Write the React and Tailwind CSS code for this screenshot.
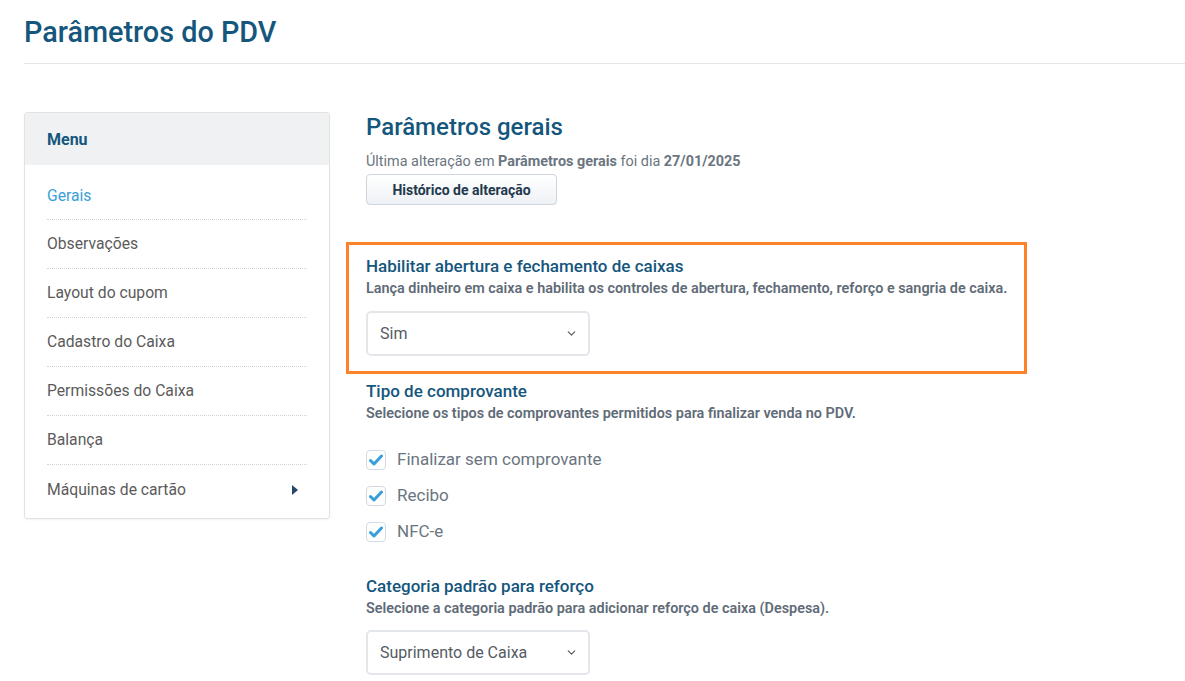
import { ChevronDown } from 'lucide-react'

const menu = ['Gerais', 'Observações', 'Layout do cupom', 'Cadastro do Caixa', 'Permissões do Caixa', 'Balança', 'Máquinas de cartão']

function Check({ label }) {
  return (
    <label className="flex h-9 items-center gap-[11px]">
      <span className="flex h-5 w-5 items-center justify-center rounded-[4px] border border-[#d5dae0] bg-white">
        <svg width="14" height="12" viewBox="0 0 14 12">
          <path d="M1.5 6.5 L5 10 L12.5 2" fill="none" stroke="#3a9fd8" strokeWidth="3" strokeLinecap="round" strokeLinejoin="round" />
        </svg>
      </span>
      <span className="text-[17px] text-[#6b7580]">{label}</span>
    </label>
  )
}

function Select({ value, className = '' }) {
  return (
    <div className={`flex h-[45px] w-[224px] items-center justify-between rounded-[5px] border-2 border-[#e3e7eb] bg-white pl-3 pr-2.5 ${className}`}>
      <span className="text-base text-[#555b63]">{value}</span>
      <ChevronDown size={13} strokeWidth={2.2} className="text-[#555b63]" />
    </div>
  )
}

function Field({ title, desc, selectGap, children }) {
  return (
    <div>
      <div className="text-[17px] font-medium leading-5 text-[#15567d]">{title}</div>
      <div className="mt-[3px] whitespace-nowrap text-[14.4px] font-semibold leading-5 text-[#5f6b77]">{desc}</div>
      {children}
    </div>
  )
}

export default function App() {
  return (
    <div className="min-h-[681px] bg-white pl-6 font-['Roboto',sans-serif]">
      {/* Cabeçalho */}
      <div className="border-b border-[#e6e6e6] pb-[13px] pt-[14px]">
        <h1 className="text-[28.8px] font-medium leading-9 text-[#15567d]">Parâmetros do PDV</h1>
      </div>

      <div className="mt-[48px] flex gap-9">
        {/* Menu lateral */}
        <div className="h-fit w-[306px] shrink-0 overflow-hidden rounded-[3px] border border-[#e2e2e2] shadow-[0_1px_2px_rgba(0,0,0,0.05)]">
          <div className="flex h-[52px] items-center bg-[#f0f1f3] px-[22px]">
            <span className="pt-[2px] text-base font-bold text-[#15567d]">Menu</span>
          </div>
          <div className="px-[22px] pb-[4px] pt-[7px]">
            {menu.map((m, i) => (
              <div
                key={m}
                className={`flex items-center justify-between text-[15.7px] ${i === 0 ? 'h-[48px]' : 'h-[49px]'} ${
                  i < menu.length - 1 ? 'border-b border-dotted border-[#d3d3d3]' : ''
                } ${i === 0 ? 'text-[#3a9fd6]' : 'text-[#5b5b5b]'}`}
              >
                <span>{m}</span>
                {i === menu.length - 1 && (
                  <svg width="6" height="10" viewBox="0 0 6 10" className="mr-[9px]">
                    <path d="M0 0 L6 5 L0 10 Z" fill="#24476a" />
                  </svg>
                )}
              </div>
            ))}
          </div>
        </div>

        {/* Conteúdo */}
        <div className="flex-1">
          <h2 className="pt-[1px] text-[24px] font-medium leading-7 text-[#15567d]">Parâmetros gerais</h2>
          <div className="mt-[11px] text-[14.4px] leading-5 text-[#6b7580]">
            Última alteração em <b className="font-bold">Parâmetros gerais</b> foi dia{' '}
            <b className="font-bold">27/01/2025</b>
          </div>
          <button className="mt-[2px] h-[31px] w-[191px] rounded-[4px] border border-[#cfd6de] bg-gradient-to-b from-white to-[#eef1f5] text-sm font-bold text-[#23384d]">
            Histórico de alteração
          </button>

          <div className="-ml-5 mt-[37px] w-[681px] border-[3px] border-[#ff8128] px-[17px] pb-[15px] pt-[11px]">
            <Field
              title="Habilitar abertura e fechamento de caixas"
              desc="Lança dinheiro em caixa e habilita os controles de abertura, fechamento, reforço e sangria de caixa."
            >
              <Select value="Sim" className="mt-[12px]" />
            </Field>
          </div>

          <div className="mt-[7px]">
            <Field
              title="Tipo de comprovante"
              desc="Selecione os tipos de comprovantes permitidos para finalizar venda no PDV."
            >
              <div className="mt-[18px] flex flex-col">
                <Check label="Finalizar sem comprovante" />
                <Check label="Recibo" />
                <Check label="NFC-e" />
              </div>
            </Field>
          </div>

          <div className="mt-[26px]">
            <Field
              title="Categoria padrão para reforço"
              desc="Selecione a categoria padrão para adicionar reforço de caixa (Despesa)."
            >
              <Select value="Suprimento de Caixa" className="mt-[11px]" />
            </Field>
          </div>
        </div>
      </div>
    </div>
  )
}
